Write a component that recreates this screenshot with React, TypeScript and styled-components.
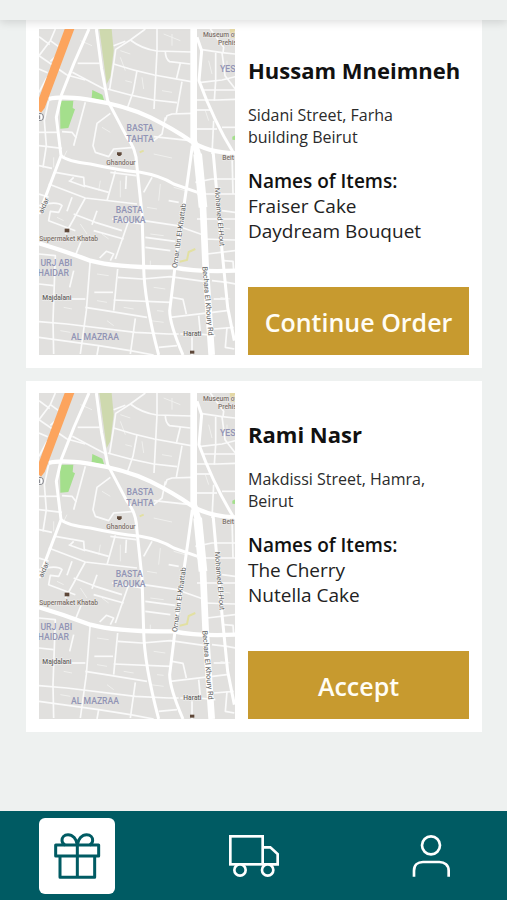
import React from "react";
import styled, { createGlobalStyle } from "styled-components";

const teal = "#005b63";
const paper = "#eef1f0";

const GlobalStyle = createGlobalStyle`
  *, *::before, *::after { box-sizing: border-box; }
  body {
    margin: 0;
    background: ${paper};
    color: #111;
    font-family: "Open Sans", "Noto Sans", sans-serif;
  }
`;

const Page = styled.div`
  min-height: 100vh;
  display: flex;
  flex-direction: column;
`;

const TopBar = styled.header`
  position: sticky;
  top: 0;
  z-index: 1;
  height: 20px;
  background: ${paper};
  box-shadow: 0 2px 10px rgba(0, 0, 0, 0.14);
`;

const Orders = styled.main`
  flex: 1;
  display: flex;
  flex-direction: column;
  gap: 13px;
  margin-top: -3px;
  padding: 0 25px 24px 26px;
`;

const Card = styled.article`
  display: grid;
  grid-template-columns: 196fr 221fr;
  gap: 13px;
  padding: 12px 13px 13px;
  background: #fff;
`;

const MapView = styled.svg`
  display: block;
  width: 100%;
  height: 326px;
  background: #e2e1df;
  font-family: Roboto, "Open Sans", sans-serif;
`;

const Details = styled.div`
  display: flex;
  flex-direction: column;
  min-width: 0;
`;

const Name = styled.h2`
  margin: 24px 0 0;
  font-size: 22px;
  line-height: 34px;
  font-weight: 700;
  white-space: nowrap;
`;

const Address = styled.address`
  max-width: 180px;
  margin-top: 17px;
  color: #2b2b2b;
  font-size: 16px;
  line-height: 22px;
  font-style: normal;
`;

const ItemsTitle = styled.h3`
  margin: 21px 0 0;
  font-size: 19px;
  line-height: 25px;
  font-weight: 600;
`;

const Items = styled.ul`
  margin: 0;
  padding: 0;
  list-style: none;
  color: #222;
  font-size: 19px;
  line-height: 25px;
`;

const Action = styled.button`
  height: 68px;
  margin-top: auto;
  padding: 2px 0 0;
  border: 0;
  background: #c79a2f;
  color: #fffdf5;
  font-family: inherit;
  font-size: 25px;
  font-weight: 600;
  white-space: nowrap;
  cursor: pointer;
`;

const TabBar = styled.nav`
  position: sticky;
  bottom: 0;
  display: flex;
  justify-content: space-between;
  height: 89px;
  padding: 7px 38px 6px 39px;
  background: ${teal};
`;

const Tab = styled.button<{ $active?: boolean }>`
  width: 76px;
  height: 76px;
  padding: 0;
  border: 0;
  border-radius: 6px;
  background: ${(p) => (p.$active ? "#fff" : "transparent")};
  color: ${(p) => (p.$active ? teal : "#fff")};
  cursor: pointer;
`;

const TabIcon = styled.svg`
  display: block;
  width: 100%;
  height: 100%;
  fill: none;
  stroke: currentColor;
  stroke-width: 8;
`;

const streets = [
  // north-west
  "M26 48 L58 72", "M75 25 L60 60 L26 105", "M26 105 L110 163", "M26 145 L52 156", "M85 100 L60 122", "M60 60 L88 80",
  "M126 155 L225 207", "M142 128 H208", "M110 163 L165 178", "M26 215 L50 170",
  // north-centre
  "M345 25 L300 58 L256 86 L250 130 L238 205", "M300 58 Q335 85 380 91 L485 94", "M380 25 V91 L371 265",
  "M405 91 Q405 115 418 123 L480 130", "M450 127 L438 176", "M250 130 Q310 150 372 163 L482 183",
  "M232 205 Q300 225 370 238 L440 246", "M320 150 L308 215 L292 260", "M455 183 L438 278", "M250 75 L285 62",
  // north-east
  "M515 87 L575 96 L615 100", "M556 96 L556 180 L552 240", "M575 96 L584 165 L615 205", "M512 185 L575 178 L615 168", "M520 208 H615", "M500 238 H560 L615 236",
  "M540 25 L580 80 L578 96", "M500 268 H540", "M500 325 H560", "M550 300 L545 400", "M575 320 H615",
  // centre
  "M165 245 L130 375", "M240 278 L200 308 L188 375 L195 395 L235 408 L250 385 L312 380", "M405 300 L410 285 L425 280 L485 278",
  "M405 290 L395 340 L370 360", "M370 348 L480 360", "M26 335 H85", "M55 240 L42 300 L48 375 L38 440", "M26 375 L95 383",
  "M95 333 L125 335 L138 352", "M26 435 L65 443",
  // west of the main street
  "M75 455 L160 470 L162 495 L235 515", "M115 480 L165 498", "M255 452 L230 540", "M240 455 L318 465", "M288 465 L286 505",
  "M55 490 L165 532 L320 550", "M26 520 L55 530", "M165 532 L105 640", "M26 555 Q80 540 95 555 L85 575 L60 572 L55 600 L135 630",
  "M130 580 L195 605 L275 630", "M200 570 L185 612", "M125 530 L110 572", "M295 600 L255 715", "M245 595 L335 610", "M190 630 L280 655",
  "M120 480 L130 470", "M155 655 L135 705", "M208 712 L228 692 L250 700 L240 720",
  // east of the main street
  "M365 470 L340 515", "M340 600 L440 615 L525 645", "M500 520 H615", "M495 485 L545 475 H615", "M605 400 L608 520",
  "M415 540 L445 545", "M345 680 L420 690", "M345 650 L435 662", "M500 595 H615", "M520 655 L615 658", "M575 570 L615 575",
  // south
  "M26 700 L75 705 L68 900 L70 1000", "M180 715 L168 870 L150 1000", "M262 745 L250 870", "M262 770 L335 775 L420 768 L520 782",
  "M120 835 H165", "M192 815 H248", "M250 838 L420 845", "M26 903 L110 910 L315 935 L415 940 L445 940", "M26 950 L205 975 L300 990 L370 1003",
  "M165 860 L240 872 L350 890", "M315 893 L300 1000", "M205 975 L200 1003", "M425 830 L458 836 L468 880", "M420 890 L590 870",
  "M505 885 L510 935", "M450 940 H505 L555 945", "M545 780 L590 785 L615 790", "M550 835 H585", "M580 720 L608 722 L610 750",
  "M550 925 L610 920", "M590 920 L585 980 L612 985", "M385 980 L440 975", "M485 950 V1003", "M26 790 L70 795", "M130 750 L118 800",
  "M530 700 L615 690",
];

const lanes = [
  "M150 60 L185 75", "M270 90 L300 100", "M285 180 L305 185", "M335 170 L340 205", "M395 210 L425 215", "M270 110 L285 150",
  "M400 40 L450 60", "M425 40 V75", "M535 120 L545 160", "M590 120 V150", "M525 270 L535 300", "M70 410 V440", "M110 390 L100 410",
  "M215 320 L240 335", "M180 430 L225 440", "M210 480 L205 510", "M270 480 V530", "M370 400 L425 412", "M390 490 L385 540",
  "M350 560 L380 565", "M430 500 L465 510", "M360 640 L400 645", "M80 590 L100 600", "M150 610 L170 640", "M215 640 L235 655",
  "M120 700 L160 712", "M200 760 L235 765", "M100 860 L125 865", "M200 840 L230 845", "M280 860 L310 865", "M370 800 L405 805",
  "M380 870 L400 872", "M230 900 L250 915", "M90 930 L120 935", "M360 900 L400 905", "M565 620 L600 625", "M570 830 L600 835", "M360 720 V740",
];

const avenues = [
  "M176 25 L130 130 L92 226", "M92 228 L78 290 L92 405 L26 580",
  "M92 405 Q110 422 180 430 Q260 448 330 455 Q390 465 430 490 L502 515",
  "M198 25 L214 145 L232 240 L290 350 Q318 385 319 430 L335 580 L340 740 Q342 840 385 1003",
  "M486 375 Q470 500 440 690 L418 870 Q418 910 458 1003",
  "M500 50 L514 90 L506 180 Q550 300 610 398",
  "M548 390 L575 690 L592 860 L612 960",
];

const majorRoads = [
  "M55 235 Q90 225 170 236 Q280 252 360 290 Q430 325 480 360 Q530 395 616 398",
  "M26 668 Q100 690 180 720 Q260 742 430 740 Q500 755 616 750",
];

function StreetMap() {
  return (
    <MapView viewBox="26 25 588 978" preserveAspectRatio="xMidYMid slice" role="img" aria-label="Map of the delivery area in Beirut">
      <rect x="26" y="25" width="590" height="980" fill="#e1e0de" />
      <path d="M207 25 H244 L250 90 L240 170 L229 190 Z" fill="#ced9ae" />
      <path d="M598 25 H616 V52 H602 Z" fill="#e4d8a5" />
      <g fill="none" stroke="#f0f0ee" strokeWidth="3">
        {lanes.map((d) => <path key={d} d={d} />)}
      </g>
      <g fill="none" stroke="#fafafa" strokeWidth="5" strokeLinejoin="round">
        {streets.map((d) => <path key={d} d={d} />)}
      </g>
      <path d="M186 208 L216 222 L222 241 L184 232 Z" fill="#a4df8c" />
      <path d="M89 240 H129 L127 262 L134 266 L114 322 L90 324 Z" fill="#a4df8c" />
      <path d="M606 348 L616 344 V358 L606 357 Z" fill="#a4df8c" />
      <path d="M448 723 L470 718 L475 694 L495 685 M328 395 L340 390" fill="none" stroke="#e2e0a2" strokeWidth="6" />
      <g fill="none" stroke="#fff" strokeLinejoin="round">
        <g strokeWidth="9">{avenues.map((d) => <path key={d} d={d} />)}</g>
        <g strokeWidth="13">{majorRoads.map((d) => <path key={d} d={d} />)}</g>
        <path d="M490 25 V360 L502 400 L518 560 L526 740 L544 1003" strokeWidth="20" />
        <path d="M502 400 L518 560" strokeWidth="26" />
      </g>
      <path d="M103 25 H132 L43 262 L32 276 L26 270 V232 Z" fill="#fca45d" />
      <circle cx="28" cy="289" r="13" fill="#fff" />
      <path d="M24 279 H33 Q39 279 39 289 Q39 299 33 299 H24 M28 284 V295" fill="none" stroke="#74757c" strokeWidth="3" />
      <g fill="#9194b5" fontSize="26" fontWeight="500" textAnchor="middle">
        <text x="329" y="332">BASTA</text>
        <text x="329" y="363">TAHTA</text>
        <text x="297" y="577">BASTA</text>
        <text x="297" y="608">FAOUKA</text>
        <text x="194" y="957">AL MAZRAA</text>
        <text x="600" y="153">YESS</text>
        <text x="78" y="735">URJ ABI</text>
        <text x="69" y="766">HAIDAR</text>
      </g>
      <g fill="#7d716a" fontSize="20" fontWeight="500" stroke="#eeedeb" strokeWidth="3" paintOrder="stroke">
        <text x="518" y="50">Museum of</text>
        <text x="563" y="74">Prehistory</text>
        <text x="228" y="434">Ghandour</text>
        <text x="27" y="662">Supermaket Khatab</text>
        <text x="576" y="417">Beit</text>
      </g>
      <g fill="#65635f" fontSize="20" fontWeight="500" stroke="#f4f4f3" strokeWidth="3" paintOrder="stroke">
        <text x="36" y="838">Majdalani</text>
        <text x="459" y="945">Harati</text>
      </g>
      <g fill="#5f5f60" fontSize="22" stroke="#fafafa" strokeWidth="3" paintOrder="stroke">
        <text transform="translate(440 743) rotate(-82)">Omar Ibn El-Khattab</text>
        <text transform="translate(553 502) rotate(85)">Mohamed El-Hout</text>
        <text transform="translate(516 738) rotate(85)">Bechara El Khoury Rd</text>
        <text transform="translate(37 580) rotate(-66)">aidar</text>
      </g>
      <g fill="#5e4839">
        <path d="M260 395 H274 V401 L270 406 H264 L260 401 Z" />
        <path d="M103 624 H117 V635 H103 Z" />
        <path d="M479 990 H492 V999 H479 Z" />
      </g>
    </MapView>
  );
}

function GiftIcon() {
  return (
    <TabIcon viewBox="116 53 228 228" aria-hidden="true">
      <g strokeWidth="9" strokeLinejoin="round">
        <rect x="166" y="134" width="129" height="33" />
        <path d="M179 167 V231 H283 V167 M231 134 V231" />
        <path d="M231 134 C229 116 217 103 203 103 C191 103 185 112 185 120 C185 127 189 132 194 134" />
        <path d="M231 134 C233 116 245 103 259 103 C271 103 277 112 277 120 C277 127 273 132 268 134" />
      </g>
    </TabIcon>
  );
}

function TruckIcon() {
  return (
    <TabIcon viewBox="48 53 228 228" aria-hidden="true">
      <rect x="91" y="108" width="97" height="84" />
      <path d="M188 141 H211 L233 161 V192 H188" />
      <circle cx="120" cy="209" r="17" fill={teal} />
      <circle cx="203" cy="209" r="17" fill={teal} />
    </TabIcon>
  );
}

function PersonIcon() {
  return (
    <TabIcon viewBox="579 53 228 228" aria-hidden="true">
      <circle cx="693" cy="135" r="27" />
      <path d="M642 229 V211 C642 195 653 185 669 185 H718 C734 185 746 195 746 211 V229" />
    </TabIcon>
  );
}

const orders = [
  {
    name: "Hussam Mneimneh",
    address: "Sidani Street, Farha building Beirut",
    items: ["Fraiser Cake", "Daydream Bouquet"],
    action: "Continue Order",
  },
  {
    name: "Rami Nasr",
    address: "Makdissi Street, Hamra, Beirut",
    items: ["The Cherry", "Nutella Cake"],
    action: "Accept",
  },
];

export default function App() {
  return (
    <Page>
      <GlobalStyle />
      <TopBar />
      <Orders>
        {orders.map((order) => (
          <Card key={order.name}>
            <StreetMap />
            <Details>
              <Name>{order.name}</Name>
              <Address>{order.address}</Address>
              <ItemsTitle>Names of Items:</ItemsTitle>
              <Items>
                {order.items.map((item) => <li key={item}>{item}</li>)}
              </Items>
              <Action type="button">{order.action}</Action>
            </Details>
          </Card>
        ))}
      </Orders>
      <TabBar aria-label="Main">
        <Tab type="button" $active aria-current="page" aria-label="Orders"><GiftIcon /></Tab>
        <Tab type="button" aria-label="Deliveries"><TruckIcon /></Tab>
        <Tab type="button" aria-label="Profile"><PersonIcon /></Tab>
      </TabBar>
    </Page>
  );
}
